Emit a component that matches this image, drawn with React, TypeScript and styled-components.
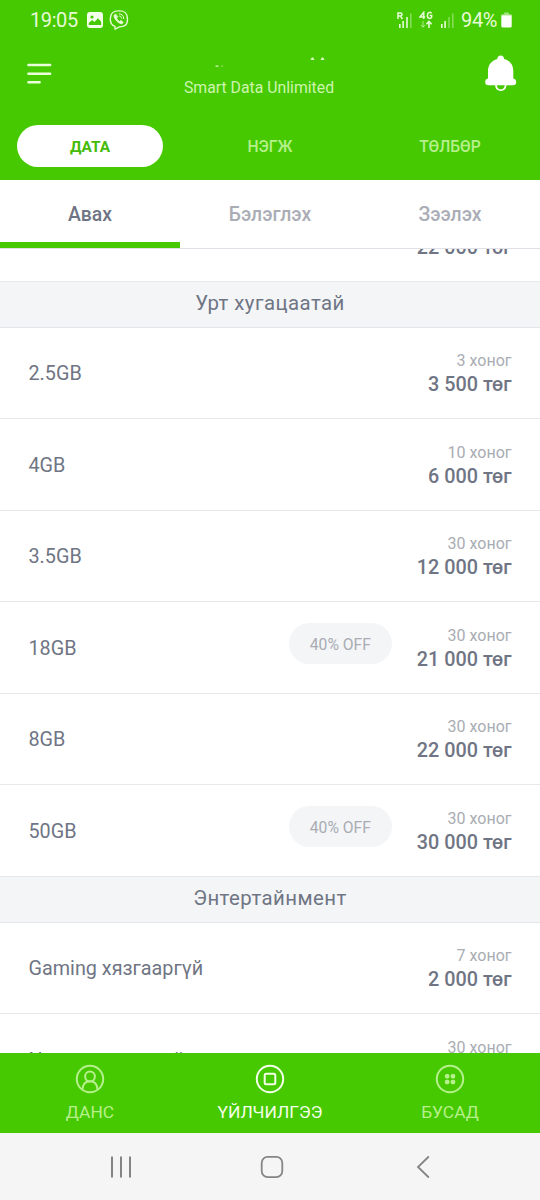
import React from 'react';
import styled, { createGlobalStyle } from 'styled-components';

const GREEN = '#46c900';
const PALE = '#b6f08c';

const GlobalStyle = createGlobalStyle`
  * { box-sizing: border-box; }
  body { margin: 0; font-family: Roboto, "Noto Sans", sans-serif; background: #fff; }
  svg { display: block; }
`;

const Screen = styled.div`
  width: 540px;
  height: 1200px;
  display: flex;
  flex-direction: column;
  overflow: hidden;
  background: #fff;
  color: #6f7584;
`;

const Header = styled.header`
  flex: none;
  height: 180px;
  background: ${GREEN};
  color: #fff;
  display: flex;
  flex-direction: column;
`;

const StatusBar = styled.div`
  height: 40px;
  padding: 0 28px 0 30px;
  display: flex;
  align-items: center;
  justify-content: space-between;
  font-size: 20px;
  line-height: 40px;
  color: #e6fbd8;
`;

const StatusGroup = styled.div<{ $gap: number }>`
  display: flex;
  align-items: center;
  gap: ${(p) => p.$gap}px;
`;

const Clock = styled.span`
  letter-spacing: -0.4px;
`;

const BatteryLevel = styled.span`
  font-size: 20px;
  letter-spacing: -0.4px;
`;

const TitleBar = styled.div`
  height: 72px;
  padding: 10px 22px 0 26px;
  display: flex;
  justify-content: space-between;
`;

const TitleBlock = styled.div`
  display: flex;
  flex-direction: column;
  align-items: center;
  padding-top: 6px;
  margin-right: 18px;
`;

const Plan = styled.div`
  margin-top: 10px;
  font-size: 15.8px;
  line-height: 20px;
  color: #cdf5b0;
`;

const IconButton = styled.button<{ $top: number }>`
  border: 0;
  padding: ${(p) => p.$top}px 0 0;
  background: none;
  display: flex;
  align-items: flex-start;
`;

const PillTabs = styled.nav`
  height: 68px;
  padding-top: 13px;
  display: grid;
  grid-template-columns: repeat(3, 1fr);
  justify-items: center;
  align-items: start;
`;

const PillTab = styled.div<{ $active?: boolean }>`
  width: 146px;
  height: 42px;
  border-radius: 21px;
  background: ${(p) => (p.$active ? '#fff' : 'transparent')};
  color: ${(p) => (p.$active ? '#44bb08' : PALE)};
  font-size: ${(p) => (p.$active ? 15.4 : 15.6)}px;
  font-weight: ${(p) => (p.$active ? 700 : 500)};
  line-height: 44px;
  text-align: center;
`;

const SubTabs = styled.nav`
  flex: none;
  height: 69px;
  display: grid;
  grid-template-columns: repeat(3, 1fr);
  border-bottom: 1px solid #dfe1e6;
`;

const SubTab = styled.div<{ $active?: boolean }>`
  height: 67.5px;
  border-bottom: 6px solid ${(p) => (p.$active ? GREEN : 'transparent')};
  color: ${(p) => (p.$active ? '#6f7584' : '#aaadb5')};
  font-size: 19.4px;
  font-weight: 500;
  line-height: 69px;
  text-align: center;
`;

const Viewport = styled.main`
  flex: none;
  height: 804px;
  overflow: hidden;
`;

const List = styled.div`
  margin-top: -59px;
`;

const SectionTitle = styled.h2`
  margin: 0;
  height: 46px;
  background: #f4f5f7;
  border-bottom: 1px solid #e4e5e9;
  font-size: 20.4px;
  font-weight: 400;
  line-height: 43px;
  text-align: center;
  letter-spacing: 0.45px;
`;

const Row = styled.div`
  height: 91.5px;
  padding: 0 28.5px;
  display: flex;
  align-items: center;
  border-bottom: 1px solid #e7e8eb;
`;

const Name = styled.div`
  flex: 1;
  padding-top: 3px;
  font-size: 19.8px;
  line-height: 24px;
`;

const Badge = styled.div`
  width: 103px;
  height: 41px;
  margin: 0 25px 7px 0;
  border-radius: 21px;
  background: #f4f5f7;
  color: #a9acb3;
  font-size: 15.7px;
  line-height: 43px;
  text-align: center;
`;

const Cost = styled.div`
  display: flex;
  flex-direction: column;
  align-items: flex-end;
  padding-top: 1px;
`;

const Days = styled.div`
  font-size: 16px;
  line-height: 24px;
  color: #a9acb3;
`;

const Price = styled.div`
  font-size: 19.8px;
  font-weight: 500;
  line-height: 24px;
`;

const BottomNav = styled.nav`
  flex: none;
  height: 79.5px;
  background: ${GREEN};
  display: grid;
  grid-template-columns: repeat(3, 1fr);
`;

const NavItem = styled.div<{ $active?: boolean }>`
  display: flex;
  flex-direction: column;
  align-items: center;
  padding-top: 11px;
  gap: 6px;
  color: ${(p) => (p.$active ? '#f4ffe9' : PALE)};
  font-size: 17.4px;
  line-height: 25px;
`;

const SystemBar = styled.div`
  flex: 1;
  padding-top: 2px;
  background: #f5f5f5;
  display: grid;
  grid-template-columns: 242px 60px 242px;
  justify-items: center;
  align-items: center;
  color: #858585;
`;

const SignalIcon = ({ roaming, level }: { roaming?: boolean; level: number }) => (
  <svg width="16" height="17" viewBox="0 0 16 17" fill="currentColor">
    {roaming && <path d="M1 7V.9h2.5a1.5 1.5 0 0 1 0 3H1M3.3 3.9 5.4 7" fill="none" stroke="currentColor" strokeWidth="1.5" />}
    {[[2, 4], [5.3, 7], [9.2, 11], [13, 14.5]].map(([x, h], i) => (
      <rect key={x} x={x} y={16 - h} width="1.6" height={h} opacity={i < level ? 1 : 0.4} />
    ))}
  </svg>
);

const NetworkIcon = () => (
  <svg width="14" height="18" viewBox="0 0 14 18" fill="none" stroke="currentColor" strokeWidth="1.5">
    <path d="M4.7 8V1.4L1 5.9h5.2M12.5 2.6C11.8.7 8.4.8 8.4 4.4s3.4 3.7 4.3 1.7V4.6h-2" />
    <path d="M4 10v6M1.8 13.9 4 16.2l2.2-2.3" opacity=".65" strokeWidth="1" />
    <path d="M10 17v-6M7.4 13.2 10 10.5l2.6 2.7" strokeWidth="1.6" />
  </svg>
);

const BatteryIcon = () => (
  <svg width="11" height="16" viewBox="0 0 11 16" fill="#fff">
    <path d="M3.2.5h4.6v1.7h1.9q1 0 1 1H.3q0-1 1-1h1.9z" opacity=".5" />
    <path d="M.3 3.2h10.4V14q0 1.5-1.5 1.5H1.8Q.3 15.5.3 14z" />
  </svg>
);

const PictureIcon = () => (
  <svg width="16" height="16" viewBox="0 0 16 16">
    <rect width="16" height="16" rx="3" fill="#f4ffe9" />
    <circle cx="5" cy="5" r="1.6" fill={GREEN} />
    <path d="M1.8 13v-2l3.4-3 2.2 2L11 6.3l3.2 3.5V13z" fill={GREEN} />
  </svg>
);

const ViberIcon = () => (
  <svg width="20" height="20" viewBox="0 0 20 20" fill="none" stroke="currentColor" strokeWidth="1.4" strokeLinecap="round" strokeLinejoin="round">
    <path d="M10 .9c5.4 0 8.5 1.6 8.5 8s-3 8-8 8L6 19.1v-2.8C2.5 15.2 1.3 13 1.3 8.9c0-6.4 3.3-8 8.7-8z" />
    <path d="M6.3 4.3 5 5.4c.4 4 3.6 7.4 7.8 8.5l1.4-1.5-2.3-1.9-1.3 1c-1.6-.7-2.6-1.9-3.1-3.4l1-1.1z" fill="currentColor" strokeWidth="1" />
    <path d="M10.2 3.8c2.8 0 4.5 1.9 4.5 4.8M10.6 6c1.2.1 1.9.9 1.9 2.2" strokeWidth="1" />
  </svg>
);

const MenuIcon = () => (
  <svg width="26" height="22" viewBox="0 0 26 22" stroke="#e9ffda" strokeWidth="2.4" strokeLinecap="round">
    <path d="M2.4 2h21.8M2.4 10.7h21.8M2.4 19.3h11.3" />
  </svg>
);

const BellIcon = () => (
  <svg width="34" height="38" viewBox="0 0 34 38" fill="#fff">
    <path d="M16.7.5c2.1 0 3.3 1.4 3.4 3.4C26 5.5 29.3 10 29.3 16V23.5C31 23.8 32.2 25 32.2 27 32.2 29.3 31 30.3 29 30.3H4.4C2.4 30.3 1.2 29.3 1.2 27 1.2 25 2.3 23.8 4 23.5V16C4 10 7.3 5.5 13.3 3.9 13.4 1.9 14.6.5 16.7.5z" />
    <path d="M11.9 30c.4 3.5 2.2 5.2 4.9 5.2s4.5-1.7 4.9-5.2" fill="none" stroke="#fff" strokeWidth="1.8" />
  </svg>
);

const NameFragments = () => (
  <svg width="140" height="12" viewBox="0 0 140 12" fill="#d4f9b9">
    <path d="M26.5 9.6h3v1.2h-3zM32.5 9.6h1.2v1h-1.2zM121.5 4l1.2-2.4h1.6l1.2 2.4zM131.5 4l1.2-2.4h1.6l1.2 2.4z" />
  </svg>
);

const RingIcon = ({ children }: { children: React.ReactNode }) => (
  <svg width="30" height="30" viewBox="0 0 30 30" fill="none" stroke="currentColor" strokeWidth="2">
    <circle cx="15" cy="15" r="13.2" />
    {children}
  </svg>
);

const items = [
  ['2.5GB', '3 хоног', '3 500 төг'],
  ['4GB', '10 хоног', '6 000 төг'],
  ['3.5GB', '30 хоног', '12 000 төг'],
  ['18GB', '30 хоног', '21 000 төг', '40% OFF'],
  ['8GB', '30 хоног', '22 000 төг'],
  ['50GB', '30 хоног', '30 000 төг', '40% OFF'],
];

const entertainment = [
  ['Gaming хязгааргүй', '7 хоног', '2 000 төг'],
  ['News хязгааргүй', '30 хоног', '5 000 төг'],
];

const PackageRow = ({ data: [name, days, price, badge] }: { data: string[] }) => (
  <Row>
    <Name>{name}</Name>
    {badge && <Badge>{badge}</Badge>}
    <Cost>
      <Days>{days}</Days>
      <Price>{price}</Price>
    </Cost>
  </Row>
);

export default function App() {
  return (
    <Screen>
      <GlobalStyle />
      <Header>
        <StatusBar>
          <StatusGroup $gap={6}>
            <StatusGroup $gap={9}>
              <Clock>19:05</Clock>
              <PictureIcon />
            </StatusGroup>
            <ViberIcon />
          </StatusGroup>
          <StatusGroup $gap={6}>
            <StatusGroup $gap={6}>
              <SignalIcon roaming level={3} />
              <NetworkIcon />
              <SignalIcon level={2} />
            </StatusGroup>
            <StatusGroup $gap={4}>
              <BatteryLevel>94%</BatteryLevel>
              <BatteryIcon />
            </StatusGroup>
          </StatusGroup>
        </StatusBar>
        <TitleBar>
          <IconButton $top={13} aria-label="Menu"><MenuIcon /></IconButton>
          <TitleBlock>
            <NameFragments />
            <Plan>Smart Data Unlimited</Plan>
          </TitleBlock>
          <IconButton $top={5} aria-label="Notifications"><BellIcon /></IconButton>
        </TitleBar>
        <PillTabs>
          <PillTab $active>ДАТА</PillTab>
          <PillTab>НЭГЖ</PillTab>
          <PillTab>ТӨЛБӨР</PillTab>
        </PillTabs>
      </Header>
      <SubTabs>
        <SubTab $active>Авах</SubTab>
        <SubTab>Бэлэглэх</SubTab>
        <SubTab>Зээлэх</SubTab>
      </SubTabs>
      <Viewport>
        <List>
          <PackageRow data={['', '30 хоног', '22 000 төг']} />
          <SectionTitle>Урт хугацаатай</SectionTitle>
          {items.map((d) => <PackageRow key={d[0]} data={d} />)}
          <SectionTitle>Энтертайнмент</SectionTitle>
          {entertainment.map((d) => <PackageRow key={d[0]} data={d} />)}
        </List>
      </Viewport>
      <BottomNav>
        <NavItem>
          <RingIcon>
            <circle cx="15" cy="12.5" r="4.9" />
            <path d="M7.5 25.2c.4-5 3.4-7.9 7.5-7.9s7.1 2.9 7.5 7.9" />
          </RingIcon>
          ДАНС
        </NavItem>
        <NavItem $active>
          <RingIcon><rect x="9.7" y="9.7" width="10.6" height="10.6" rx="1.5" /></RingIcon>
          ҮЙЛЧИЛГЭЭ
        </NavItem>
        <NavItem>
          <RingIcon>
            <g fill="currentColor" stroke="none">
              {[9.9, 15.7].map((x) => [9.9, 15.7].map((y) => (
                <rect key={`${x}-${y}`} x={x} y={y} width="4.5" height="4.5" rx="1.6" />
              )))}
            </g>
          </RingIcon>
          БУСАД
        </NavItem>
      </BottomNav>
      <SystemBar>
        <svg width="22" height="22" viewBox="0 0 22 22" stroke="currentColor" strokeWidth="2" strokeLinecap="round">
          <path d="M2 1.2v19.6M11 1.2v19.6M20 1.2v19.6" />
        </svg>
        <svg width="24" height="24" viewBox="0 0 24 24" fill="none" stroke="currentColor" strokeWidth="1.8">
          <rect x="1.7" y="1.9" width="20.6" height="20.2" rx="6" />
        </svg>
        <svg width="14" height="22" viewBox="0 0 14 22" fill="none" stroke="currentColor" strokeWidth="1.8" strokeLinecap="round">
          <path d="M12.3 1 2 11l10.3 10" />
        </svg>
      </SystemBar>
    </Screen>
  );
}
